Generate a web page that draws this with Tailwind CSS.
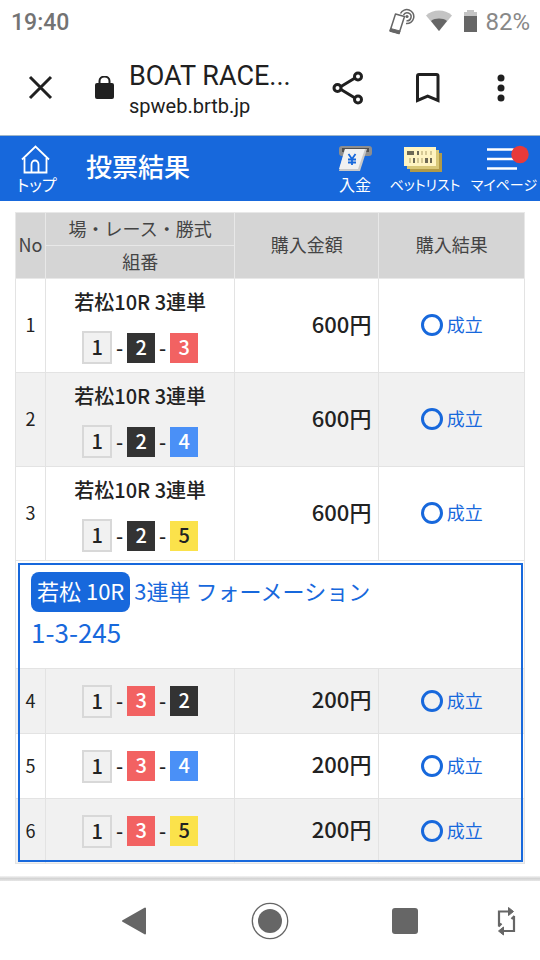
<!DOCTYPE html>
<html lang="ja">
<head>
  <meta charset="UTF-8">
  <meta name="viewport" content="width=device-width, initial-scale=1.0">
  <title>BOAT RACE 投票結果</title>
  <script src="https://cdn.jsdelivr.net/npm/@tailwindcss/browser@4"></script>
</head>
<body class="flex min-h-screen flex-col bg-white font-['Noto_Sans_CJK_JP',sans-serif] text-[#222]">

  <!-- Status bar -->
  <div class="flex h-11 items-center justify-between pr-[10px] pl-[11px] font-[Roboto,sans-serif] leading-none text-[#737373]">
    <span class="text-[23px] font-medium">19:40</span>
    <div class="flex items-center">
      <svg class="mr-[11px] h-7 w-7" viewBox="0 0 28 28" fill="none" stroke="#666">
        <path d="M8.500 6 17.500 8.500 12 25.500 3 23Z" stroke-width="1.500" stroke-linejoin="round"/>
        <path d="M3.600 20.500 13 23 12.200 25.500 3 23Z" fill="#666"/>
        <circle cx="20" cy="8.500" r="1.600" fill="#666" stroke="none"/>
        <path d="M16.500 7a4 4 0 1 1 3 5.700" stroke-width="1.500"/>
        <path d="M13.500 5.500a7 7 0 1 1 5.500 10" stroke-width="1.500"/>
      </svg>
      <svg class="mr-3 h-6 w-[26px]" viewBox="0 0 26 24">
        <path d="M0 5.500C7-1.200 19-1.200 26 5.500L13 21Z" fill="#c4c4c4"/>
        <path d="M5 11C9 7.800 17 7.800 21 11L13 21Z" fill="#666"/>
      </svg>
      <svg class="mr-2 h-6 w-[13px]" viewBox="0 0 13 24">
        <path d="M0 2H3V0H10V2H13V6H0Z" fill="#c4c4c4"/>
        <path d="M0 6H13V22H0Z" fill="#666"/>
      </svg>
      <span class="text-2xl leading-none text-[#888]">82%</span>
    </div>
  </div>

  <!-- Browser toolbar -->
  <div class="flex h-[92px] items-center border-b border-[#9fb6c8] pr-[22px] pb-1 pl-[26px] font-[Roboto,sans-serif] text-[#202020]">
    <button type="button" aria-label="閉じる" class="mr-[38px]">
      <svg class="h-7 w-7" viewBox="0 0 28 28" fill="none" stroke="currentColor" stroke-width="3">
        <path d="M4 3 25 24M25 3 4 24"/>
      </svg>
    </button>
    <svg class="mr-[13px] h-6 w-6 shrink-0" viewBox="0 0 24 24" fill="none">
      <rect x="3" y="7" width="19" height="16" rx="2" fill="#202020"/>
      <path d="M7.500 8V5a5 4.500 0 0 1 10 0V8" stroke="#202020" stroke-width="2"/>
    </svg>
    <div class="min-w-0 flex-1 pt-1">
      <div class="text-[27px] leading-8 whitespace-nowrap">BOAT RACE...</div>
      <div class="text-xl leading-7 whitespace-nowrap">spweb.brtb.jp</div>
    </div>
    <div class="flex items-center">
      <button type="button" aria-label="共有" class="mr-[50px]">
        <svg class="h-9 w-8" viewBox="0 0 32 36" fill="none" stroke="currentColor" stroke-width="3">
          <path d="M9 16.500 23 8M9 19.500 23 28"/>
          <circle cx="5.500" cy="18" r="3.500"/>
          <circle cx="26" cy="6.500" r="3.500"/>
          <circle cx="26" cy="29.500" r="3.500"/>
        </svg>
      </button>
      <button type="button" aria-label="ブックマーク" class="mr-[42px]">
        <svg class="h-8 w-7" viewBox="0 0 28 32" fill="none" stroke="currentColor" stroke-width="3">
          <path d="M3.500 28.500V4Q3.500 2.500 5 2.500H22.500Q24 2.500 24 4V28.500L13.700 24.200Z"/>
        </svg>
      </button>
      <button type="button" aria-label="メニュー" class="flex w-[34px] justify-center">
        <svg class="h-8 w-2" viewBox="0 0 8 32" fill="currentColor">
          <circle cx="4" cy="6" r="3.500"/>
          <circle cx="4" cy="16" r="3.500"/>
          <circle cx="4" cy="26" r="3.500"/>
        </svg>
      </button>
    </div>
  </div>

  <!-- Site header -->
  <header class="flex h-[65px] items-start bg-[#1768dc] pt-2 text-base text-white">
    <a href="#" class="ml-[17px] flex w-11 flex-col whitespace-nowrap [font-feature-settings:'palt']">
      <svg class="ml-[3px] h-[30px] w-[30px] shrink-0" viewBox="0 0 30 30" fill="none" stroke="white" stroke-width="1.800">
        <path d="M2 15.500 15.500 2.500 29 15.500"/>
        <path d="M4.500 14V28.500H11.500V20.500a3.500 4 0 0 1 7 0V28.500H26.500V14M11.500 28.500H18.500"/>
      </svg>
      <span class="leading-5">トップ</span>
    </a>
    <h1 class="ml-[25px] text-[26px] leading-[44px] font-medium whitespace-nowrap">投票結果</h1>
    <nav class="ml-auto flex gap-[9px] pr-[2px] whitespace-nowrap [font-feature-settings:'palt']">
      <a href="#" class="flex w-[50px] flex-col items-center">
        <svg class="h-[30px] w-9 shrink-0" viewBox="0 0 36 30">
          <rect x="2" y="2" width="33" height="10" rx="3" fill="#8e8e8e"/>
          <rect x="5" y="4" width="27" height="4" fill="#505050"/>
          <path d="M8 5H30L23 27H2Z" fill="#c9c9c9"/>
          <path d="M8 5H28L21 25H2Z" fill="#f1f1f1"/>
          <path d="M11.500 10 15 15 18.500 10M15 15V21M11 15.500H19M11 18.500H19" fill="none" stroke="#1768dc" stroke-width="1.800"/>
        </svg>
        <span class="leading-5">入金</span>
      </a>
      <a href="#" class="flex w-[72px] flex-col items-center">
        <svg class="h-[30px] w-11 shrink-0" viewBox="0 0 44 30">
          <rect x="7" y="9" width="32" height="19" fill="#b19a48"/>
          <rect x="4" y="6" width="32" height="19" fill="#d9c878"/>
          <rect x="1" y="3" width="32" height="19" fill="#fff4c2"/>
          <path d="M4 7H11V11H4ZM14 7H16V11H14ZM10 14H12V19H10ZM22 14H25V19H22ZM27 14H29V19H27Z" fill="#6e6955"/>
          <path d="M18 7H20V11H18ZM22 7H24V11H22ZM27 7H29V11H27ZM6 14H8V19H6ZM14 14H16V19H14ZM18 14H20V19H18Z" fill="#d6c995"/>
        </svg>
        <span class="text-sm leading-5">ベットリスト</span>
      </a>
      <a href="#" class="flex w-[68px] flex-col items-center">
        <svg class="h-[30px] w-16 shrink-0" viewBox="0 0 64 30">
          <path d="M15 5.500H45M15 15H45M15 24.500H45" stroke="white" stroke-width="2.500"/>
          <circle cx="48" cy="10.500" r="8.700" fill="#e83a3a"/>
        </svg>
        <span class="text-sm leading-5">マイページ</span>
      </a>
    </nav>
  </header>

  <main class="px-[15px] pt-[11px] pb-3">
    <table class="w-full table-fixed border-collapse text-lg [&_td]:border [&_td]:border-[#e3e3e3] [&_th]:border [&_th]:border-[#e8e8e8] [&_th]:pb-[3px] [&_th]:font-normal">
      <colgroup>
        <col class="w-[30px]">
        <col class="w-[37.2%]">
        <col class="w-[28.3%]">
        <col>
      </colgroup>
      <thead class="bg-[#d5d5d5] leading-6 text-[#444]">
        <tr class="h-[33px]">
          <th rowspan="2">No</th>
          <th>場・レース・勝式</th>
          <th rowspan="2">購入金額</th>
          <th rowspan="2">購入結果</th>
        </tr>
        <tr class="h-[33px]">
          <th>組番</th>
        </tr>
      </thead>
      <tbody class="text-center">
        <tr class="h-[94px]">
          <td class="pb-1">1</td>
          <td>
            <div class="mb-[14px] text-xl leading-[30px] font-medium">若松10R 3連単</div>
            <div class="flex items-center justify-center text-xl leading-7 font-medium">
              <span class="h-[33px] w-[30px] border-2 border-[#d8d8d8] bg-[#f1f1f1] leading-[27px]">1</span><span class="w-[15px]">-</span><span class="h-[30px] w-7 bg-[#333] text-white">2</span><span class="w-[15px]">-</span><span class="h-[30px] w-7 bg-[#f26262] text-white">3</span>
            </div>
          </td>
          <td class="pr-[7px] pb-[5px] text-right text-[22px] font-medium">600円</td>
          <td class="pb-[2px] text-[#1768dc]"><span class="flex items-center justify-center gap-1"><i class="h-[22px] w-[22px] rounded-full border-3 border-[#1768dc]"></i><span class="pb-[2px]">成立</span></span></td>
        </tr>
        <tr class="h-[94px] bg-[#f1f1f1]">
          <td class="pb-1">2</td>
          <td>
            <div class="mb-[14px] text-xl leading-[30px] font-medium">若松10R 3連単</div>
            <div class="flex items-center justify-center text-xl leading-7 font-medium">
              <span class="h-[33px] w-[30px] border-2 border-[#d8d8d8] bg-[#f1f1f1] leading-[27px]">1</span><span class="w-[15px]">-</span><span class="h-[30px] w-7 bg-[#333] text-white">2</span><span class="w-[15px]">-</span><span class="h-[30px] w-7 bg-[#4a90f7] text-white">4</span>
            </div>
          </td>
          <td class="pr-[7px] pb-[5px] text-right text-[22px] font-medium">600円</td>
          <td class="pb-[2px] text-[#1768dc]"><span class="flex items-center justify-center gap-1"><i class="h-[22px] w-[22px] rounded-full border-3 border-[#1768dc]"></i><span class="pb-[2px]">成立</span></span></td>
        </tr>
        <tr class="h-[94px]">
          <td class="pb-1">3</td>
          <td>
            <div class="mb-[14px] text-xl leading-[30px] font-medium">若松10R 3連単</div>
            <div class="flex items-center justify-center text-xl leading-7 font-medium">
              <span class="h-[33px] w-[30px] border-2 border-[#d8d8d8] bg-[#f1f1f1] leading-[27px]">1</span><span class="w-[15px]">-</span><span class="h-[30px] w-7 bg-[#333] text-white">2</span><span class="w-[15px]">-</span><span class="h-[30px] w-7 bg-[#fbe24b]">5</span>
            </div>
          </td>
          <td class="pr-[7px] pb-[5px] text-right text-[22px] font-medium">600円</td>
          <td class="pb-[2px] text-[#1768dc]"><span class="flex items-center justify-center gap-1"><i class="h-[22px] w-[22px] rounded-full border-3 border-[#1768dc]"></i><span class="pb-[2px]">成立</span></span></td>
        </tr>
      </tbody>
      <!-- Formation bet -->
      <tbody class="text-center outline-2 -outline-offset-4 outline-[#1768dc]">
        <tr class="h-[108px]">
          <td colspan="4" class="px-[15px] pt-[11px] text-left align-top text-[#1768dc]">
            <div class="flex items-center gap-1 text-[22px] leading-9">
              <span class="rounded-lg bg-[#1768dc] px-[6px] pb-1 text-white">若松 10R</span>
              <span class="pb-1">3連単 フォーメーション</span>
            </div>
            <div class="text-[26px] leading-10">1-3-245</div>
          </td>
        </tr>
        <tr class="h-[65px] bg-[#f1f1f1]">
          <td class="pb-[2px]">4</td>
          <td>
            <div class="flex items-center justify-center text-xl leading-7 font-medium">
              <span class="h-[33px] w-[30px] border-2 border-[#d8d8d8] bg-[#f1f1f1] leading-[27px]">1</span><span class="w-[15px]">-</span><span class="h-[30px] w-7 bg-[#f26262] text-white">3</span><span class="w-[15px]">-</span><span class="h-[30px] w-7 bg-[#333] text-white">2</span>
            </div>
          </td>
          <td class="pr-[7px] pb-[5px] text-right text-[22px] font-medium">200円</td>
          <td class="text-[#1768dc]"><span class="flex items-center justify-center gap-1"><i class="h-[22px] w-[22px] rounded-full border-3 border-[#1768dc]"></i><span class="pb-[2px]">成立</span></span></td>
        </tr>
        <tr class="h-[65px]">
          <td class="pb-[2px]">5</td>
          <td>
            <div class="flex items-center justify-center text-xl leading-7 font-medium">
              <span class="h-[33px] w-[30px] border-2 border-[#d8d8d8] bg-[#f1f1f1] leading-[27px]">1</span><span class="w-[15px]">-</span><span class="h-[30px] w-7 bg-[#f26262] text-white">3</span><span class="w-[15px]">-</span><span class="h-[30px] w-7 bg-[#4a90f7] text-white">4</span>
            </div>
          </td>
          <td class="pr-[7px] pb-[5px] text-right text-[22px] font-medium">200円</td>
          <td class="text-[#1768dc]"><span class="flex items-center justify-center gap-1"><i class="h-[22px] w-[22px] rounded-full border-3 border-[#1768dc]"></i><span class="pb-[2px]">成立</span></span></td>
        </tr>
        <tr class="h-[65px] bg-[#f1f1f1]">
          <td class="pb-[2px]">6</td>
          <td>
            <div class="flex items-center justify-center text-xl leading-7 font-medium">
              <span class="h-[33px] w-[30px] border-2 border-[#d8d8d8] bg-[#f1f1f1] leading-[27px]">1</span><span class="w-[15px]">-</span><span class="h-[30px] w-7 bg-[#f26262] text-white">3</span><span class="w-[15px]">-</span><span class="h-[30px] w-7 bg-[#fbe24b]">5</span>
            </div>
          </td>
          <td class="pr-[7px] pb-[5px] text-right text-[22px] font-medium">200円</td>
          <td class="text-[#1768dc]"><span class="flex items-center justify-center gap-1"><i class="h-[22px] w-[22px] rounded-full border-3 border-[#1768dc]"></i><span class="pb-[2px]">成立</span></span></td>
        </tr>
      </tbody>
    </table>
  </main>

  <!-- Android navigation bar -->
  <div class="mt-auto">
    <div class="h-[5px] bg-linear-to-b from-[#f4f4f4] via-[#d4d4d4] to-[#e6e6e6]"></div>
    <div class="grid h-20 grid-cols-8 items-center text-[#666]">
      <button type="button" aria-label="戻る" class="col-span-2 col-start-2 flex justify-center">
        <svg class="h-8 w-7" viewBox="0 0 28 32" fill="currentColor">
          <path d="M2 16 24 3.500V28.500Z" stroke="currentColor" stroke-width="2" stroke-linejoin="round"/>
        </svg>
      </button>
      <button type="button" aria-label="ホーム" class="col-span-2 flex justify-center">
        <svg class="h-10 w-10" viewBox="0 0 40 40">
          <circle cx="20" cy="20" r="17.700" fill="none" stroke="currentColor" stroke-width="1.300"/>
          <circle cx="20" cy="20" r="12" fill="currentColor"/>
        </svg>
      </button>
      <button type="button" aria-label="履歴" class="col-span-2 flex justify-center">
        <svg class="h-7 w-7" viewBox="0 0 28 28"><rect x="1" y="1" width="26" height="26" rx="3" fill="currentColor"/></svg>
      </button>
      <button type="button" aria-label="画面を回転" class="flex justify-center">
        <svg class="h-8 w-6" viewBox="0 0 24 32" fill="none" stroke="currentColor" stroke-width="2.200">
          <path d="M5 21.500V6.500H15M20 11V26H9M4.500 21.500 7.500 18.500M20.500 11 17.500 14"/>
          <path d="M14.500 2.500 19.500 6.500 14.500 10.500ZM9.500 22 4.500 26 9.500 30Z" fill="currentColor" stroke-width="1"/>
        </svg>
      </button>
    </div>
  </div>
</body>
</html>
